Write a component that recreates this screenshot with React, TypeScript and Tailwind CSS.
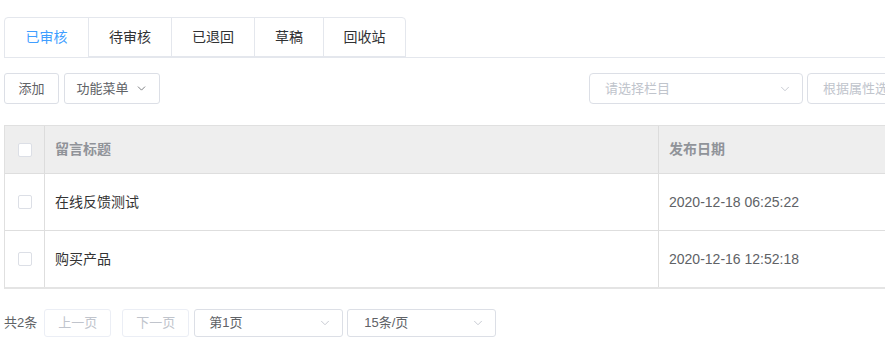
import { ChevronDown } from "lucide-react";

const TABS = ["已审核", "待审核", "已退回", "草稿", "回收站"];

const ROWS = [
  { title: "在线反馈测试", date: "2020-12-18 06:25:22" },
  { title: "购买产品", date: "2020-12-16 12:52:18" },
];

function Checkbox() {
  return <span className="block h-[14px] w-[14px] rounded-[2px] border border-[#dcdfe6] bg-white" />;
}

export default function App() {
  return (
    <div
      className="h-[361px] w-[885px] overflow-hidden bg-white text-[#606266]"
      style={{ fontFamily: '"Liberation Sans", "Noto Sans CJK SC", sans-serif' }}
    >
      <div className="w-[1100px] pl-[4px] pt-[17px]">
        {/* tabs */}
        <div className="flex border-b border-[#e4e7ed]">
          <div className="-mb-px flex rounded-t-[4px] border border-[#e4e7ed]">
            {TABS.map((t, i) => (
              <div
                key={t}
                className={`flex h-[39px] items-center justify-center text-[14px] ${
                  i === 4 ? "w-[82px]" : i === 3 ? "w-[69px]" : "w-[83px]"
                } ${i > 0 ? "border-l border-[#e4e7ed]" : ""} ${
                  i === 0 ? "border-b border-b-white text-[#409eff]" : "border-b border-b-[#e4e7ed] text-[#303133]"
                }`}
              >
                {t}
              </div>
            ))}
          </div>
        </div>

        {/* toolbar */}
        <div className="mt-[15px] flex items-center">
          <button className="h-[31px] w-[55px] rounded-[3px] border border-[#dcdfe6] text-[13px] text-[#606266]">添加</button>
          <button className="ml-[5px] flex h-[31px] w-[96px] items-center justify-center gap-[6px] rounded-[3px] border border-[#dcdfe6] text-[13px] text-[#606266]">
            功能菜单
            <ChevronDown size={13} strokeWidth={1.5} />
          </button>
          <div className="ml-[429px] flex h-[31px] w-[214px] items-center justify-between rounded-[4px] border border-[#dcdfe6] pl-[15px] pr-[10px] text-[13px] text-[#c0c4cc]">
            请选择栏目
            <ChevronDown size={14} strokeWidth={1.5} className="text-[#c0c4cc]" />
          </div>
          <div className="ml-[4px] flex h-[31px] w-[214px] items-center rounded-[4px] border border-[#dcdfe6] px-[15px] text-[13px] text-[#c0c4cc]">
            根据属性选择
          </div>
        </div>

        {/* table */}
        <div className="mt-[21px] border-l border-t border-b-2 border-[#e0e0e0] border-b-[#e4e4e4]">
          <div className="flex h-[47px] bg-[#eeeeee] text-[14px] font-bold text-[#909399]">
            <div className="flex w-[40px] items-center justify-center border-r border-[#dcdcdc]">
              <Checkbox />
            </div>
            <div className="flex w-[614px] items-center border-r border-[#dcdcdc] pl-[10px]">留言标题</div>
            <div className="flex flex-1 items-center pl-[10px]">发布日期</div>
          </div>
          {ROWS.map((r) => (
            <div key={r.date} className="flex h-[57px] border-t border-[#dedede] text-[14px]">
              <div className="flex w-[40px] items-center justify-center border-r border-[#dedede]">
                <Checkbox />
              </div>
              <div className="flex w-[614px] items-center border-r border-[#dedede] pl-[10px] text-[#333333]">{r.title}</div>
              <div className="flex flex-1 items-center pl-[10px] text-[#606266]">{r.date}</div>
            </div>
          ))}
        </div>

        {/* pagination */}
        <div className="mt-[20px] flex h-[28px] items-center text-[13px]">
          <span className="mr-[7px] text-[#606266]">共2条</span>
          <button className="h-[28px] w-[67px] rounded-[3px] border border-[#ebeef5] text-[13px] text-[#c0c4cc]">上一页</button>
          <button className="ml-[11px] h-[28px] w-[67px] rounded-[3px] border border-[#ebeef5] text-[13px] text-[#c0c4cc]">下一页</button>
          <div className="ml-[5px] flex h-[28px] w-[149px] items-center justify-between rounded-[3px] border border-[#dcdfe6] pl-[14px] pr-[10px] text-[13px] text-[#606266]">
            第1页
            <ChevronDown size={14} strokeWidth={1.5} className="text-[#c0c4cc]" />
          </div>
          <div className="ml-[4px] flex h-[28px] w-[149px] items-center justify-between rounded-[3px] border border-[#dcdfe6] pl-[16px] pr-[10px] text-[13px] text-[#606266]">
            15条/页
            <ChevronDown size={14} strokeWidth={1.5} className="text-[#c0c4cc]" />
          </div>
        </div>
      </div>
    </div>
  );
}
